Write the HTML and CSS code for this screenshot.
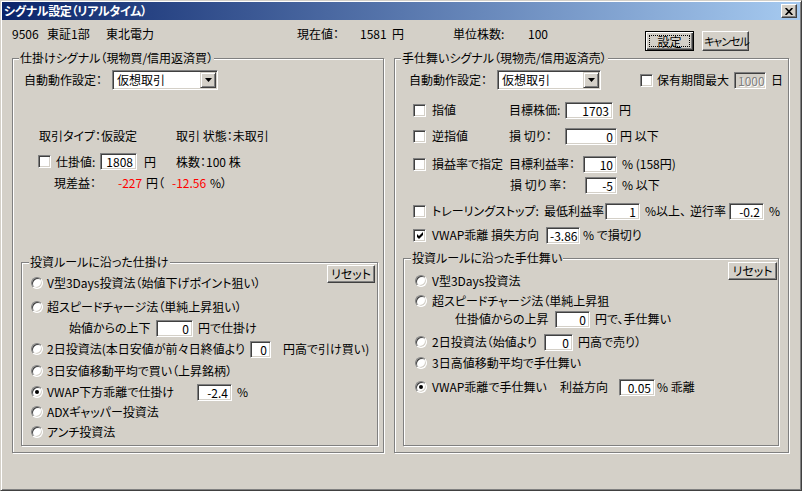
FILE: index.html
```html
<!DOCTYPE html>
<html lang="ja">
<head>
  <meta charset="utf-8" />
  <title>シグナル設定（リアルタイム）</title>
  <link rel="stylesheet" href="styles.css">
</head>
<body>
<div class="window">
  <div class="titlebar">
    <span class="title">シグナル設定（リアルタイム）</span>
    <span class="close-btn"><svg width="8" height="7" viewBox="0 0 8 7"><path d="M0.6 0 L7.4 7 M7.4 0 L0.6 7" stroke="#000" stroke-width="1.7"/></svg></span>
  </div>

  <div class="info">
    <span>9506</span><span>東証1部</span><span>東北電力</span>
    <span>現在値：</span><span>1581</span><span>円</span>
    <span>単位株数:</span><span>100</span>
    <button class="btn default"><span class="focus">設定</span></button>
    <button class="btn cancel">キャンセル</button>
  </div>

  <div class="panels">
    <!-- entry side -->
    <div class="group outer left">
      <span class="legend">仕掛けシグナル（現物買/信用返済買）</span>

      <div class="row l-auto">
        <span class="lbl-auto">自動動作設定：</span>
        <span class="combo combo-l"><span class="combo-text">仮想取引</span><span class="combo-btn"><svg width="7" height="4" viewBox="0 0 7 4"><polygon points="0,0 7,0 3.5,4" fill="#000"/></svg></span></span>
      </div>

      <div class="row l-type">
        <span class="lbl-type">取引タイプ：仮設定</span>
        <span>取引 状態：未取引</span>
      </div>

      <div class="row l-price">
        <span class="cb"></span>
        <span class="lbl-price">仕掛値:</span>
        <span class="field f-price">1808</span>
        <span class="lbl-yen">円</span>
        <span>株数：100 株</span>
      </div>

      <div class="row l-profit">
        <span class="lbl-profit">現差益：</span>
        <span class="neg v-yen">-227</span>
        <span class="v-paren">円（</span>
        <span class="neg v-pct">-12.56</span>
        <span>%）</span>
      </div>

      <div class="group inner inner-l">
        <span class="legend">投資ルールに沿った仕掛け</span>
        <button class="btn reset">リセット</button>

        <div class="row radio-row rl-1"><span class="radio"></span><span>V型3Days投資法（始値下げポイント狙い）</span></div>
        <div class="row radio-row rl-2"><span class="radio"></span><span>超スピードチャージ法（単純上昇狙い）</span></div>
        <div class="row radio-row rl-sub">
          <span class="lbl-open">始値からの上下</span>
          <span class="field f-open">0</span>
          <span class="after">円で仕掛け</span>
        </div>
        <div class="row radio-row rl-3">
          <span class="radio"></span><span class="lbl-2day">2日投資法(本日安値が前々日終値より</span>
          <span class="field f-2day">0</span>
          <span class="after-wide">円高で引け買い)</span>
        </div>
        <div class="row radio-row rl-4"><span class="radio"></span><span>3日安値移動平均で買い（上昇銘柄）</span></div>
        <div class="row radio-row rl-5">
          <span class="radio on"></span><span class="lbl-vwap-l">VWAP下方乖離で仕掛け</span>
          <span class="field f-vwap-l">-2.4</span>
          <span class="after">%</span>
        </div>
        <div class="row radio-row rl-6"><span class="radio"></span><span>ADXギャッパー投資法</span></div>
        <div class="row radio-row rl-7"><span class="radio"></span><span>アンチ投資法</span></div>
      </div>
    </div>

    <!-- exit side -->
    <div class="group outer right">
      <span class="legend">手仕舞いシグナル（現物売/信用返済売）</span>

      <div class="row r-auto">
        <span class="lbl-auto">自動動作設定：</span>
        <span class="combo combo-r"><span class="combo-text">仮想取引</span><span class="combo-btn"><svg width="7" height="4" viewBox="0 0 7 4"><polygon points="0,0 7,0 3.5,4" fill="#000"/></svg></span></span>
        <span class="cb cb-hold"></span>
        <span class="lbl-hold">保有期間最大</span>
        <span class="field disabled f-hold">1000</span>
        <span class="after">日</span>
      </div>

      <div class="row r-row r-limit">
        <span class="cb"></span>
        <span class="lbl-kind">指値</span>
        <span class="lbl-target">目標株価:</span>
        <span class="field f-target">1703</span>
        <span class="after-6">円</span>
      </div>

      <div class="row r-row r-stop">
        <span class="cb"></span>
        <span class="lbl-kind">逆指値</span>
        <span class="lbl-target">損 切り：</span>
        <span class="field f-stop">0</span>
        <span class="after-3">円 以下</span>
      </div>

      <div class="row r-row r-rate">
        <span class="cb"></span>
        <span class="lbl-kind">損益率で指定</span>
        <span class="lbl-rate">目標利益率：</span>
        <span class="field f-rate">10</span>
        <span class="after">% (158円)</span>
      </div>

      <div class="row r-row r-cut">
        <span class="lbl-cut">損 切り 率：</span>
        <span class="field f-cut">-5</span>
        <span class="after">% 以下</span>
      </div>

      <div class="row r-row r-trail">
        <span class="cb"></span>
        <span class="lbl-trail">トレーリングストップ:</span>
        <span class="lbl-min">最低利益率</span>
        <span class="field f-min">1</span>
        <span class="after lbl-over">%以上、</span>
        <span class="lbl-back">逆行率</span>
        <span class="field f-back">-0.2</span>
        <span class="after">%</span>
      </div>

      <div class="row r-row r-vwap">
        <span class="cb on"><svg width="7" height="7" viewBox="0 0 7 7"><path d="M0 2 L2 4 L6 0 L6 3 L2 7 L0 5 Z" fill="#000"/></svg></span>
        <span class="lbl-loss">VWAP乖離 損失方向</span>
        <span class="field f-loss">-3.86</span>
        <span class="after-3">% で損切り</span>
      </div>

      <div class="group inner inner-r">
        <span class="legend">投資ルールに沿った手仕舞い</span>
        <button class="btn reset reset-r">リセット</button>

        <div class="row radio-row rr-1"><span class="radio"></span><span>V型3Days投資法</span></div>
        <div class="row radio-row rr-2"><span class="radio"></span><span>超スピードチャージ法（単純上昇狙</span></div>
        <div class="row radio-row rr-sub">
          <span class="lbl-rise">仕掛値からの上昇</span>
          <span class="field f-rise">0</span>
          <span class="after">円で、手仕舞い</span>
        </div>
        <div class="row radio-row rr-3">
          <span class="radio"></span><span class="lbl-open-r">2日投資法（始値より</span>
          <span class="field f-open-r">0</span>
          <span class="after">円高で売り）</span>
        </div>
        <div class="row radio-row rr-4"><span class="radio"></span><span>3日高値移動平均で手仕舞い</span></div>
        <div class="row radio-row rr-5">
          <span class="radio on"></span><span class="lbl-vwap-r">VWAP乖離で手仕舞い</span>
          <span class="lbl-dir">利益方向</span>
          <span class="field f-dir">0.05</span>
          <span class="after-2">% 乖離</span>
        </div>
      </div>
    </div>
  </div>
</div>
</body>
</html>
```

FILE: styles.css
```css
*{box-sizing:border-box;}

body{
  margin:0; background:#d4d0c8; color:#000;
  font:12px/14px "Noto Sans CJK JP","Noto Sans",sans-serif;
  font-feature-settings:"palt";
}

/* window frame */
.window{
  width:802px; height:491px; padding:1px;
  background:#d4d0c8;
  border:1px solid; border-color:#d4d0c8 #404040 #404040 #d4d0c8;
  box-shadow: inset 1px 1px #fff, inset -1px -1px #808080;
}
.titlebar{
  display:flex; align-items:center; justify-content:space-between;
  height:18px; padding:0 3px 0 2px;
  background:linear-gradient(90deg,#0a246a 0%,#a6caf0 100%);
}
.title{color:#fff; font-weight:700; white-space:nowrap; letter-spacing:-0.3px;}
.close-btn{
  width:16px; height:14px; display:flex; align-items:center; justify-content:center;
  background:#d4d0c8;
  border:1px solid; border-color:#fff #404040 #404040 #fff;
  box-shadow: inset -1px -1px #808080;
}

/* raised buttons */
.btn{
  font:inherit; color:#000; padding:0; margin:0; height:20px;
  background:#d4d0c8; white-space:nowrap;
  border:1px solid; border-color:#fff #404040 #404040 #fff;
  box-shadow: inset -1px -1px #808080;
}
.btn.default{
  border-color:#000;
  box-shadow: inset 1px 1px #fff, inset -1px -1px #404040, inset -2px -2px #808080;
  display:flex; padding:3px;
}
.btn.default .focus{flex:1; border:1px dotted #000; line-height:12px;}
.btn.cancel{font-size:11px; letter-spacing:-1px; padding-left:1px;}

/* info line */
.info{
  display:grid; align-items:start; height:31px; padding:7px 0 0 10px;
  grid-template-columns:35px 59px 191px 63px 32px 61px 75px 117px 57px 47px;
  white-space:nowrap;
}
.info .btn{margin-top:4px; width:49px;}
.info .btn.cancel{width:47px;}

/* group boxes */
.panels{display:flex; gap:10px; padding-left:10px; margin-top:7px;}
.group{
  position:relative;
  border:1px solid #808080;
  box-shadow: 1px 1px 0 #fff, inset 1px 1px 0 #fff;
}
.legend{
  position:absolute; top:-8px; left:6px; padding:0 1px;
  background:#d4d0c8; white-space:nowrap;
}
.inner .legend{left:7px;}
.outer{height:395px;}
.left{width:372px;}
.right{width:395px;}
.inner{height:184px; margin-left:8px;}
.inner-l{width:357px; margin-top:72px;}
.inner-r{width:376px; height:188px; margin-top:14px;}

.row{display:flex; align-items:center; white-space:nowrap;}
.row > *{flex:none;}

/* controls */
.field{
  display:inline-block; height:17px; padding:0 3px;
  background:#fff; text-align:right; line-height:15px;
  border:1px solid; border-color:#808080 #fff #fff #808080;
  box-shadow: inset 1px 1px #404040, inset -1px -1px #d4d0c8;
}
.field.disabled{background:#d4d0c8; color:#808080; text-shadow:1px 1px 0 #fff;}
.cb{
  width:13px; height:13px; background:#fff;
  display:flex; align-items:center; justify-content:center;
  border:1px solid; border-color:#808080 #fff #fff #808080;
  box-shadow: inset 1px 1px #404040, inset -1px -1px #d4d0c8;
}
.cb svg{margin:1px 0 0 1px;}
.radio{
  width:12px; height:12px; border-radius:50%; background:#fff;
  display:flex; align-items:center; justify-content:center;
  border:1px solid; border-color:#808080 #fff #fff #808080;
  box-shadow: inset 1px 1px #404040, inset -1px -1px #d4d0c8;
  margin-right:4px;
}
.radio.on::after{content:""; width:4px; height:4px; border-radius:50%; background:#000;}
.combo{
  display:flex; height:20px; background:#fff;
  border:1px solid; border-color:#808080 #fff #fff #808080;
  box-shadow: inset 1px 1px #404040, inset -1px -1px #d4d0c8;
  padding:1px;
}
.combo-text{flex:1; padding:0 3px; line-height:15px;}
.combo-btn{
  width:16px; height:16px; background:#d4d0c8;
  display:flex; align-items:center; justify-content:center;
  border:1px solid; border-color:#d4d0c8 #404040 #404040 #d4d0c8;
  box-shadow: inset 1px 1px #fff, inset -1px -1px #808080;
}
.combo-l{width:106px;}
.combo-r{width:104px;}
.neg{color:#f00;}
.after{margin-left:5px;}
.after-2{margin-left:2px;}
.after-3{margin-left:3px;}
.after-6{margin-left:6px;}
.after-wide{margin-left:12px;}

/* entry side rows */
.l-auto{height:20px; margin-top:11px; padding-left:11px;}
.lbl-auto{width:88px;}
.l-type{height:14px; margin-top:39px; padding-left:26px;}
.lbl-type{width:137px;}
.l-price{height:17px; margin-top:10px; padding-left:25px;}
.lbl-price{width:44px; margin-left:5px;}
.f-price{width:37px;}
.lbl-yen{width:32px; margin-left:7px;}
.l-profit{height:14px; margin-top:6px; padding-left:41px;}
.lbl-profit{width:64px;}
.v-yen{width:28px;}
.v-paren{width:26px;}
.v-pct{width:38px;}

.reset{float:right; width:48px; height:18px; margin:2px 2px 0 0;}
.reset-r{width:49px; margin:3px 1px 0 0;}
.radio-row{height:18px; padding-left:9px;}
.rl-1{margin-top:11px;}
.rl-2{margin-top:6px;}
.inner-l .rl-sub{margin-top:3px; padding-left:47px;}
.rl-3{margin-top:3px;}
.rl-4{margin-top:4px;}
.rl-5{margin-top:3px;}
.rl-6,.rl-7{margin-top:2px;}
.lbl-open{width:87px;}
.f-open{width:37px;}
.lbl-2day{width:203px;}
.f-2day{width:21px;}
.lbl-vwap-l{width:150px;}
.f-vwap-l{width:35px;}

/* exit side rows */
.r-auto{height:20px; margin-top:11px; padding-left:14px;}
.cb-hold{margin-left:39px;}
.lbl-hold{width:77px; margin-left:4px;}
.f-hold{width:32px;}
.r-row{height:18px; padding-left:18px;}
.r-limit{margin-top:11px;}
.r-stop{margin-top:8px;}
.r-rate{margin-top:10px;}
.r-cut{margin-top:3px; padding-left:115px;}
.r-trail{margin-top:8px;}
.r-vwap{margin-top:6px;}
.lbl-kind{width:77px; margin-left:6px;}
.lbl-target{width:56px;}
.f-target{width:48px;}
.f-stop{width:52px;}
.lbl-rate{width:74px;}
.f-rate{width:34px;}
.lbl-cut{width:75px;}
.f-cut{width:32px;}
.lbl-trail{width:112px; margin-left:6px;}
.lbl-min{width:61px;}
.f-min{width:35px;}
.lbl-over{width:45px;}
.lbl-back{width:39px;}
.f-back{width:35px;}
.lbl-loss{width:114px; margin-left:6px;}
.f-loss{width:34px;}

.inner-r .radio-row{padding-left:11px;}
.inner-r .radio{margin-right:5px;}
.rr-1{margin-top:13px;}
.rr-2{margin-top:2px;}
.inner-r .rr-sub{margin-top:0; padding-left:51px;}
.rr-3{margin-top:5px;}
.rr-4{margin-top:3px;}
.rr-5{margin-top:6px;}
.lbl-rise{width:100px;}
.f-rise{width:35px;}
.lbl-open-r{width:112px;}
.f-open-r{width:29px;}
.lbl-vwap-r{width:128px;}
.lbl-dir{width:59px;}
.f-dir{width:36px;}
```
